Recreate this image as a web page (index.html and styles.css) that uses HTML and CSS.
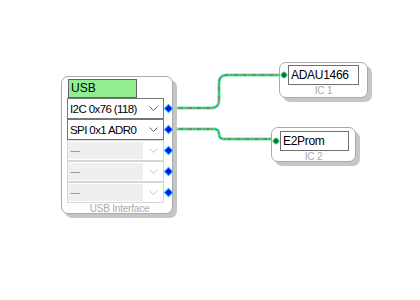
FILE: index.html
```html
<!DOCTYPE html>
<html lang="en">
<head>
    <meta charset="UTF-8">
    <meta name="viewport" content="width=device-width, initial-scale=1.0">
    <title>Hardware Configuration</title>
    <link rel="stylesheet" href="styles.css">
</head>
<body>
    <div class="canvas">
        <!-- connection wires -->
        <svg class="wires" width="420" height="300" viewBox="0 0 420 300">
            <g fill="none">
                <path class="wire-base" d="M170 108 H211 Q219 108 219 100 V83 Q219 75 227 75 H283"/>
                <path class="wire-core" d="M170 108 H211 Q219 108 219 100 V83 Q219 75 227 75 H283"/>
                <path class="wire-dash" d="M170 108 H211 Q219 108 219 100 V83 Q219 75 227 75 H283"/>

                <path class="wire-base" d="M170 129 H214 Q219 129 219 134 Q219 139 224 139 H275"/>
                <path class="wire-core" d="M170 129 H214 Q219 129 219 134 Q219 139 224 139 H275"/>
                <path class="wire-dash" d="M170 129 H214 Q219 129 219 134 Q219 139 224 139 H275"/>
            </g>
        </svg>

        <div class="node usb-node">
            <div class="title-field">USB</div>

            <div class="row">
                <div class="combo">
                    <span class="combo-text">I2C 0x76 (118)</span>
                    <svg class="chevron" width="9" height="5" viewBox="0 0 9 5"><polyline points="0.5,0.5 4.5,4.5 8.5,0.5"/></svg>
                </div>
                <span class="port"></span>
            </div>
            <div class="row">
                <div class="combo">
                    <span class="combo-text">SPI 0x1 ADR0</span>
                    <svg class="chevron" width="9" height="5" viewBox="0 0 9 5"><polyline points="0.5,0.5 4.5,4.5 8.5,0.5"/></svg>
                </div>
                <span class="port"></span>
            </div>
            <div class="row">
                <div class="combo disabled">
                    <span class="combo-text">---</span>
                    <svg class="chevron" width="9" height="5" viewBox="0 0 9 5"><polyline points="0.5,0.5 4.5,4.5 8.5,0.5"/></svg>
                </div>
                <span class="port"></span>
            </div>
            <div class="row">
                <div class="combo disabled">
                    <span class="combo-text">---</span>
                    <svg class="chevron" width="9" height="5" viewBox="0 0 9 5"><polyline points="0.5,0.5 4.5,4.5 8.5,0.5"/></svg>
                </div>
                <span class="port"></span>
            </div>
            <div class="row">
                <div class="combo disabled">
                    <span class="combo-text">---</span>
                    <svg class="chevron" width="9" height="5" viewBox="0 0 9 5"><polyline points="0.5,0.5 4.5,4.5 8.5,0.5"/></svg>
                </div>
                <span class="port"></span>
            </div>

            <div class="node-label">USB Interface</div>
        </div>

        <div class="node ic-node ic-1">
            <div class="ic-row">
                <span class="in-port"></span>
                <div class="ic-field">ADAU1466</div>
            </div>
            <div class="node-label">IC 1</div>
        </div>

        <div class="node ic-node ic-2">
            <div class="ic-row">
                <span class="in-port"></span>
                <div class="ic-field">E2Prom</div>
            </div>
            <div class="node-label">IC 2</div>
        </div>
    </div>
</body>
</html>
```

FILE: styles.css
```css
body {
    margin: 0;
    padding: 0;
    background-color: #fff;
    font-family: 'Liberation Sans', Arial, sans-serif;
    color: #000;
}

.canvas {
    position: relative;
    width: 420px;
    height: 300px;
    overflow: hidden;
}

.wires {
    position: absolute;
    left: 0;
    top: 0;
}

.wire-base {
    stroke: #4ff2b2;
    stroke-width: 3;
}

.wire-core {
    stroke: #28b868;
    stroke-width: 1;
}

.wire-dash {
    stroke: #f02818;
    stroke-width: 1;
    stroke-dasharray: 4 2 1 2;
}

/* shared block look */
.node {
    position: absolute;
    box-sizing: border-box;
    background-color: #fff;
    border: 1px solid #a9a9a9;
    border-radius: 7px;
    box-shadow: 4px 4px 0 #c6c6c6;
}

.node-label {
    font-size: 10px;
    line-height: 11px;
    color: #a9a9a9;
    text-align: center;
    letter-spacing: -0.2px;
}

/* USB interface block */
.usb-node {
    left: 61px;
    top: 76px;
    width: 112px;
    height: 138px;
    padding: 2px 0 0 5px;
}

.title-field {
    box-sizing: border-box;
    width: 69px;
    height: 19px;
    margin-left: 1px;
    padding-left: 2px;
    border: 1px solid #646464;
    background-color: #90ee90;
    font-size: 12px;
    line-height: 17px;
}

.row {
    display: flex;
    align-items: center;
    height: 21px;
}

.combo {
    box-sizing: border-box;
    width: 97px;
    height: 21px;
    display: flex;
    align-items: center;
    justify-content: space-between;
    border: 1px solid #767676;
    padding: 0 5px 0 2px;
    font-size: 11.5px;
    letter-spacing: -0.6px;
}

.chevron polyline {
    fill: none;
    stroke: #606060;
    stroke-width: 1;
}

.combo.disabled {
    border-color: #d6d6d6;
    padding-left: 0;
}

.combo.disabled .combo-text {
    box-sizing: border-box;
    width: 75px;
    height: 17px;
    padding-left: 2px;
    background-color: #efefef;
    color: #8a8a8a;
    line-height: 16px;
}

.combo.disabled .chevron polyline {
    stroke: #c4c4c4;
}

.port {
    width: 5px;
    height: 5px;
    margin-left: 2px;
    background-color: #0010f0;
    box-shadow: 0 0 0 1px #30c8ff;
    transform: rotate(45deg);
}

/* IC blocks */
.ic-node {
    padding-top: 2px;
}

.ic-1 {
    left: 279px;
    top: 62px;
    width: 89px;
    height: 36px;
}

.ic-2 {
    left: 271px;
    top: 127px;
    width: 85px;
    height: 35px;
    padding-top: 3px;
}

.ic-row {
    display: flex;
    align-items: center;
    padding-left: 2px;
}

.in-port {
    width: 4px;
    height: 4px;
    margin-right: 2px;
    background-color: #007a2a;
    box-shadow: 0 0 0 1px #34c070;
    border-radius: 1px;
    transform: rotate(45deg);
}

.ic-field {
    box-sizing: border-box;
    height: 20px;
    padding-left: 2px;
    border: 1px solid #707070;
    font-size: 12px;
    line-height: 18px;
    letter-spacing: -0.3px;
}

.ic-1 .ic-field {
    width: 71px;
}

.ic-2 .ic-field {
    width: 69px;
}
```
